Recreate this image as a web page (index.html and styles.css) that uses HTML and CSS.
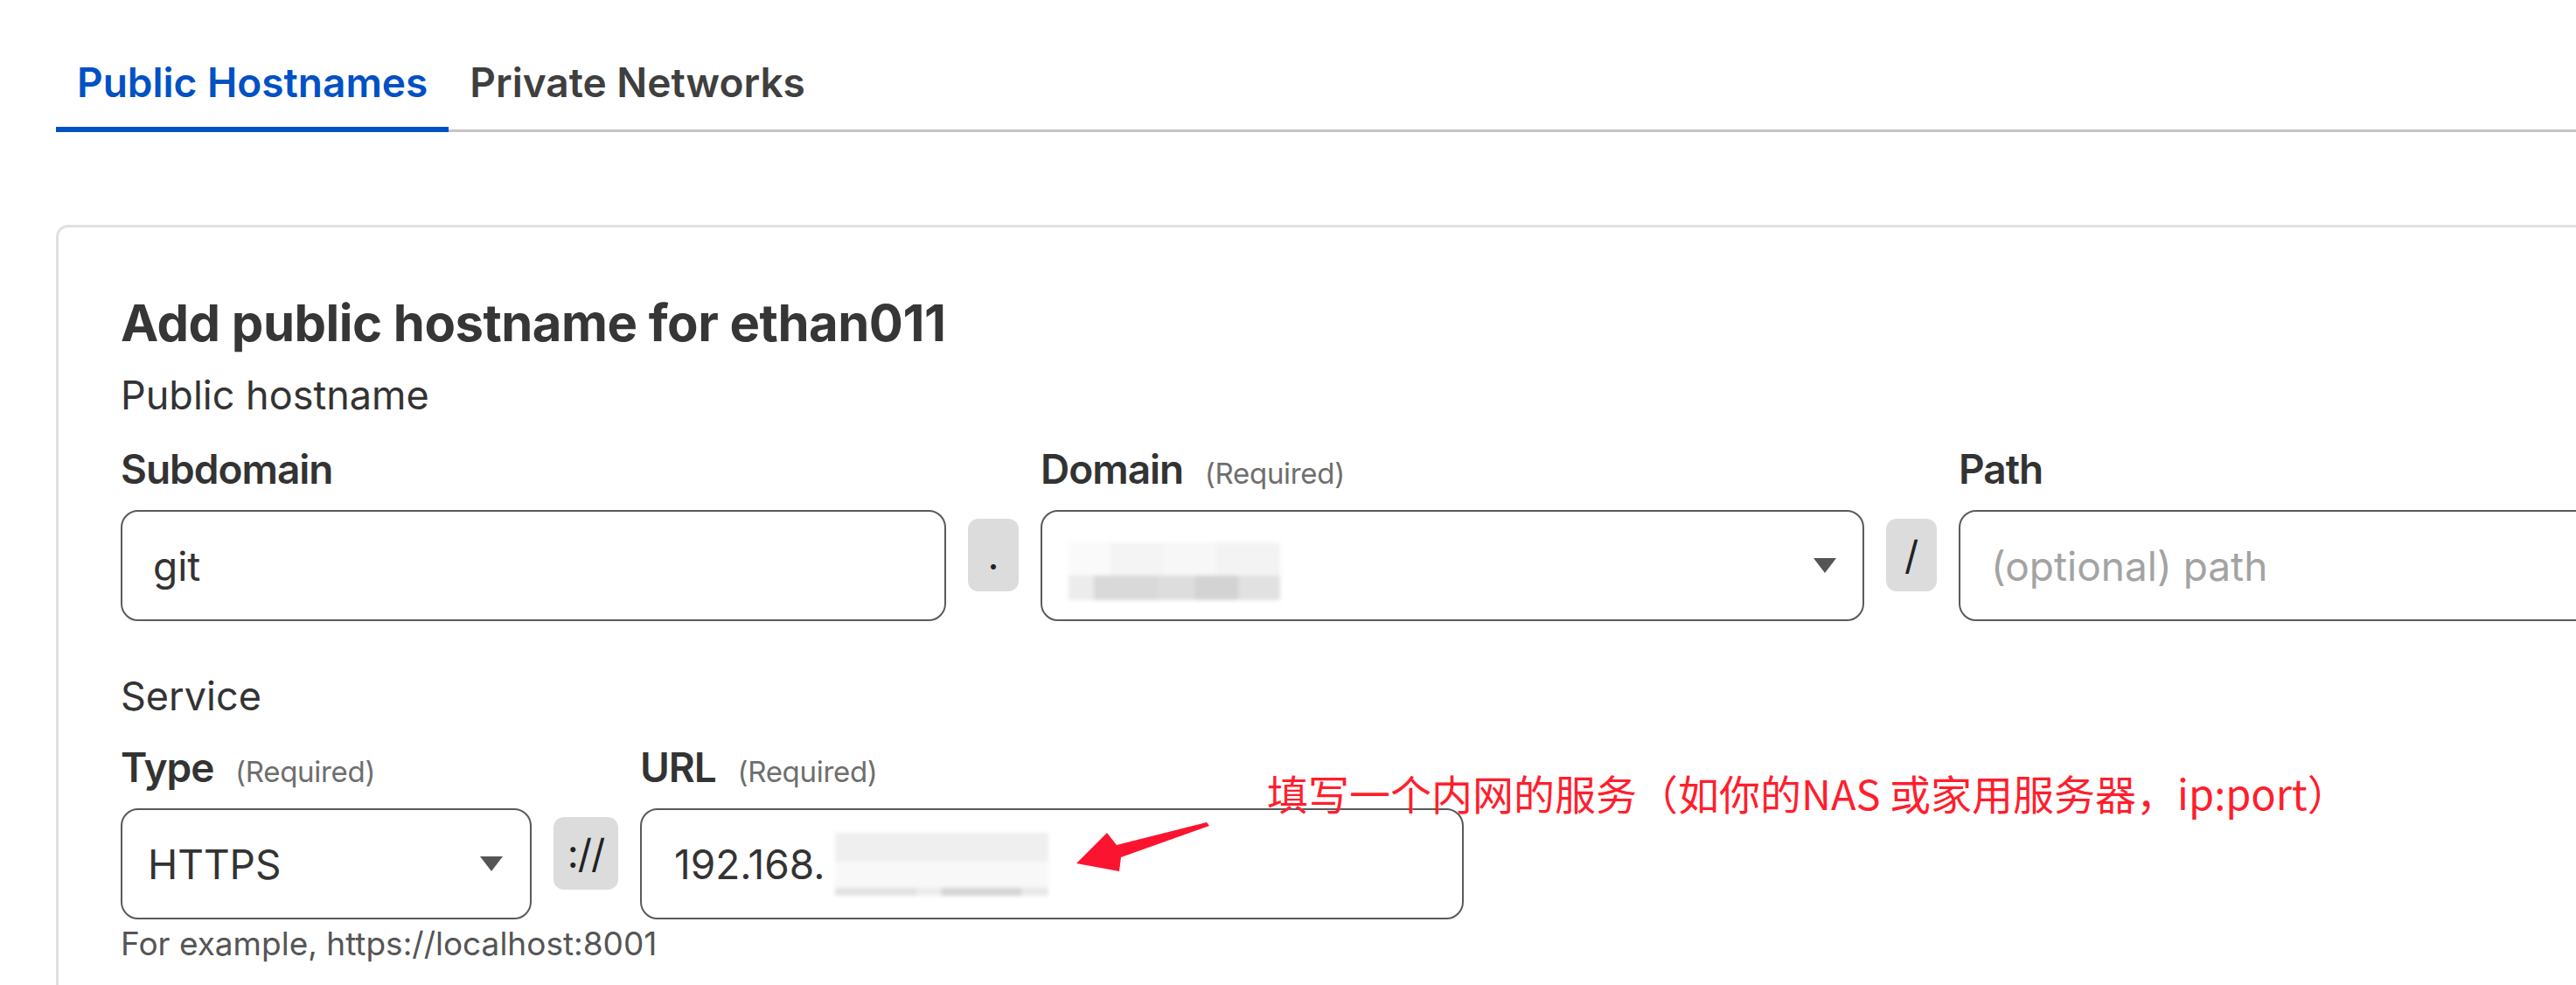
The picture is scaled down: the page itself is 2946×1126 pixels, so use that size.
FILE: index.html
```html
<!DOCTYPE html>
<html lang="en">
<head>
<meta charset="utf-8">
<title>Public Hostnames</title>
<link rel="stylesheet" href="styles.css">
</head>
<body>
<div class="page">
  <nav class="tabs">
    <div class="tab active">Public Hostnames</div>
    <div class="tab">Private Networks</div>
  </nav>

  <section class="card">
    <h2 class="card-title">Add public hostname for ethan011</h2>
    <div class="section-label">Public hostname</div>

    <div class="field-row">
      <div class="field w-main">
        <div class="field-label">Subdomain</div>
        <div class="input"><span class="value">git</span></div>
      </div>
      <div class="addon">.</div>
      <div class="field w-domain">
        <div class="field-label">Domain <span class="req">(Required)</span></div>
        <div class="input select">
          <span class="blur blur-domain">
            <span class="blur-top"></span>
            <span class="blur-bottom"><i class="b1"></i><i class="b2"></i><i class="b3"></i><i class="b4"></i><i class="b5"></i></span>
          </span>
          <span class="caret"></span>
        </div>
      </div>
      <div class="addon">/</div>
      <div class="field w-main">
        <div class="field-label">Path</div>
        <div class="input"><span class="placeholder">(optional) path</span></div>
      </div>
    </div>

    <div class="section-label service">Service</div>

    <div class="field-row row-service">
      <div class="field w-type">
        <div class="field-label">Type <span class="req">(Required)</span></div>
        <div class="input select type-select"><span class="value">HTTPS</span><span class="caret"></span></div>
      </div>
      <div class="addon addon-proto">://</div>
      <div class="field w-domain">
        <div class="field-label">URL <span class="req">(Required)</span></div>
        <div class="input url-input">
          <span class="value">192.168.</span>
          <span class="blur blur-url">
            <span class="blur-top"></span>
            <span class="blur-mid"></span>
            <span class="blur-bottom"><i class="u1"></i><i class="u2"></i><i class="u3"></i><i class="u4"></i></span>
          </span>
        </div>
      </div>
    </div>
    <div class="help">For example, https://localhost:8001</div>
  </section>

  <div class="annotation">填写一个内网的服务（如你的NAS 或家用服务器，ip:port）</div>
  <svg class="arrow" viewBox="0 0 160 66" width="160" height="66" aria-hidden="true">
    <polygon points="6,52 41,17 52,31 155,5 158,9 57,45 55,61" fill="#fb1430"/>
  </svg>
</div>
</body>
</html>
```

FILE: styles.css
```css
html, body {
  margin: 0;
  padding: 0;
  background: #ffffff;
  overflow: hidden;
}

body {
  font-family: Inter, "Liberation Sans", "Noto Sans CJK SC", sans-serif;
  color: #333333;
}

.page {
  position: relative;
  width: 2946px;
  height: 1126px;
  overflow: hidden;
}

/* Tabs */
.tabs {
  display: flex;
  margin: 68px 0 0 64px;
  border-bottom: 3px solid #c4c4c4;
}

.tab {
  font-size: 46px;
  line-height: 52px;
  font-weight: 600;
  letter-spacing: 0;
  color: #3f3f3f;
  padding: 0 24px 25px;
  border-bottom: 6px solid transparent;
  margin-bottom: -3px;
  white-space: nowrap;
}

.tab.active {
  color: #0051c3;
  border-bottom-color: #0051c3;
}

/* Card */
.card {
  margin: 106px 0 0 64px;
  width: 3100px;
  height: 1200px;
  border: 3px solid #e0e0e0;
  border-radius: 14px;
  padding: 74px 0 0 71px;
  box-sizing: border-box;
  background: #ffffff;
}

.card-title {
  margin: 0;
  font-size: 58px;
  line-height: 70px;
  font-weight: 700;
  letter-spacing: -0.5px;
  color: #363636;
}

.section-label {
  margin-top: 21px;
  font-size: 45px;
  line-height: 54px;
  font-weight: 400;
  color: #333333;
}

.section-label.service {
  margin-top: 59px;
}

.field-row {
  display: flex;
  align-items: flex-end;
  gap: 25px;
  margin-top: 29px;
}

.row-service {
  margin-top: 26px;
}

.field {
  flex: 0 0 auto;
  display: flex;
  flex-direction: column;
}

.w-main { width: 944px; }
.w-domain { width: 942px; }
.w-type { width: 470px; }

.field-label {
  font-size: 46px;
  line-height: 56px;
  height: 56px;
  font-weight: 600;
  letter-spacing: -1px;
  color: #333333;
  margin-bottom: 19px;
  white-space: nowrap;
}

.req {
  font-size: 33px;
  line-height: 1;
  font-weight: 400;
  letter-spacing: -0.3px;
  color: #6e6e6e;
  margin-left: 14px;
}

.input {
  height: 127px;
  box-sizing: border-box;
  border: 2px solid #5a5a5a;
  border-radius: 20px;
  display: flex;
  align-items: center;
  padding: 0 30px 0 35px;
  font-size: 46px;
  color: #333333;
  background: #ffffff;
}

.select {
  justify-content: space-between;
  padding-left: 30px;
}

.type-select {
  padding-left: 29px;
  padding-right: 31px;
}

.placeholder {
  color: #a3a3a3;
}

.caret {
  width: 0;
  height: 0;
  border-left: 13px solid transparent;
  border-right: 13px solid transparent;
  border-top: 17px solid #555555;
  flex: 0 0 auto;
}

.addon {
  flex: 0 0 auto;
  width: 58px;
  height: 83px;
  margin-bottom: 34px;
  border-radius: 12px;
  background: #dcdcdc;
  display: flex;
  align-items: center;
  justify-content: center;
  font-size: 45px;
  color: #222222;
}

.addon-proto {
  width: 74px;
  letter-spacing: -1px;
}

/* blurred (redacted) values */
.blur {
  display: flex;
  flex-direction: column;
  filter: blur(2px);
}

.blur-domain {
  width: 242px;
  height: 66px;
  margin-top: 13px;
}

.blur-domain .blur-top {
  height: 38px;
  background: linear-gradient(90deg, #fafafa 0 20%, #f4f4f4 20% 45%, #f7f7f7 45% 70%, #f3f3f3 70% 100%);
}

.blur-bottom {
  display: flex;
  flex: 1 1 auto;
}

.blur-bottom i {
  display: block;
  height: 100%;
}

.b1 { width: 12%; background: #ececec; }
.b2 { width: 30%; background: #d9d9d9; }
.b3 { width: 18%; background: #dddddd; }
.b4 { width: 20%; background: #d3d3d3; }
.b5 { width: 20%; background: #e1e1e1; }

.url-input {
  padding-left: 37px;
}

.blur-url {
  width: 244px;
  height: 72px;
  margin-left: 12px;
}

.blur-url .blur-top {
  height: 33px;
  background: #efefef;
}

.blur-url .blur-mid {
  height: 30px;
  background: #f8f8f8;
}

.blur-url .blur-bottom {
  height: 9px;
}

.u1 { width: 38%; background: #e2e2e2; }
.u2 { width: 12%; background: #ebebeb; }
.u3 { width: 37%; background: #d4d4d4; }
.u4 { width: 13%; background: #e8e8e8; }

.help {
  margin-top: 7px;
  font-size: 37px;
  line-height: 42px;
  color: #555555;
}

/* screenshot annotation */
.annotation {
  position: absolute;
  left: 1449px;
  top: 883px;
  font-family: "Noto Sans CJK SC", "Liberation Sans", sans-serif;
  font-size: 47px;
  line-height: 46px;
  color: #ff1e2d;
  white-space: nowrap;
}

.arrow {
  position: absolute;
  left: 1225px;
  top: 935px;
}
```
